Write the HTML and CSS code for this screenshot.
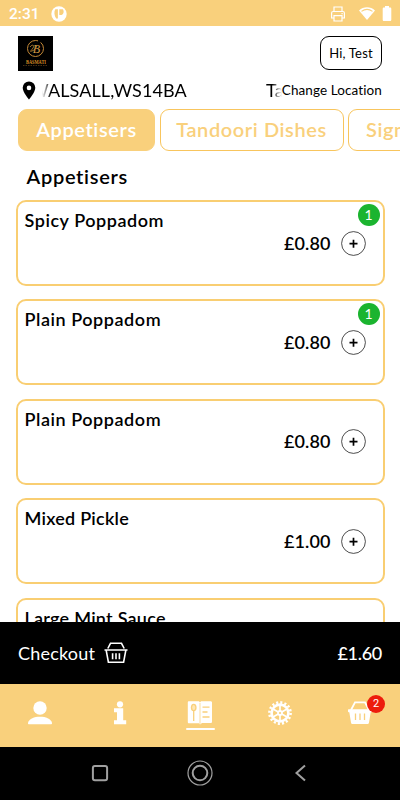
FILE: index.html
```html
<!DOCTYPE html>
<html lang="en">
<head>
    <meta charset="UTF-8">
    <meta name="viewport" content="width=device-width, initial-scale=1.0">
    <title>Menu</title>
    <link rel="stylesheet" href="styles.css">
</head>
<body>
    <div class="status-bar">
        <span class="clock">2:31</span>
        <svg class="app-icon" width="16" height="16" viewBox="0 0 16 16">
            <circle cx="8" cy="8" r="7.7" fill="#fff"/>
            <path d="M4.3 3.2h2.6v9.3H5.2C3.2 10 2.8 5.5 4.3 3.2zM8.3 3.2h3.6c1.7 2.6.4 5.8-2.2 5.8H8.3z" fill="#f9d07c"/>
        </svg>
        <div class="status-icons">
            <svg width="16" height="16" viewBox="0 0 16 16" fill="none" stroke="#fff" stroke-width="1.2">
                <path d="M4 5.500V1h8v4.500M3.700 12H1.600V7c0-1 .6-1.500 1.500-1.500h9.800c.9 0 1.500.5 1.500 1.500v5h-2.100M4 9.700h8V15H4z"/>
                <path d="M11.500 7.600h1.200"/>
            </svg>
            <svg class="wifi" width="18" height="15" viewBox="0 0 18 15">
                <path d="M1 4.500C5.500.2 12.500.2 17 4.500L9 14z" fill="#fff"/>
                <path d="M3.500 5.400c3.300-2.500 7.700-2.500 11 0" fill="none" stroke="#f9d07c" stroke-width="1.1"/>
            </svg>
            <svg width="10" height="15" viewBox="0 0 10 15">
                <path d="M3 0h4v1.500h1c.8 0 1.300.5 1.300 1.200v11c0 .8-.5 1.300-1.300 1.300H2c-.8 0-1.300-.5-1.300-1.300v-11c0-.7.5-1.200 1.300-1.200h1z" fill="#fff"/>
            </svg>
        </div>
    </div>

    <header class="header">
        <div class="logo">
            <svg width="35" height="35" viewBox="0 0 35 35">
                <rect width="35" height="35" fill="#000"/>
                <circle cx="17.5" cy="12.5" r="8" fill="none" stroke="#c58a38" stroke-width="1" stroke-dasharray="40 3"/>
                <text class="logo-mark" x="18.5" y="16.5" text-anchor="middle">B</text>
                <path d="M12 11c2-3 5-2 3 1s-4 4-1 3 4-3 5-6" fill="none" stroke="#c78b36" stroke-width=".8"/>
                <text class="logo-name" x="8" y="27.5" textLength="20" lengthAdjust="spacingAndGlyphs">BASMATI</text>
                <path d="M5 29.500h25" stroke="#65431a" stroke-width=".7" stroke-dasharray="1.500 1"/>
            </svg>
        </div>
        <button class="user-button">Hi, Test</button>
    </header>

    <div class="location">
        <svg class="pin" width="14" height="19" viewBox="0 0 14 19">
            <path fill-rule="evenodd" d="M7 .5A6.300 6.300 0 0 0 .700 6.800C.700 11.500 7 18.500 7 18.500s6.300-7 6.300-11.700A6.300 6.300 0 0 0 7 .5zm0 4.100a2.300 2.300 0 1 1 0 4.600 2.300 2.300 0 0 1 0-4.600z"/>
        </svg>
        <div class="marquee">
            <span class="address">WALSALL,WS14BA</span>
            <span class="address-next">Ta</span>
        </div>
        <a href="#" class="change-location">Change Location</a>
    </div>

    <nav class="categories">
        <a href="#" class="category active">Appetisers</a>
        <a href="#" class="category wide">Tandoori Dishes</a>
        <a href="#" class="category last">Signature</a>
    </nav>

    <main class="menu">
        <h1>Appetisers</h1>
        <div class="item">
            <div class="item-name">Spicy Poppadom</div>
            <div class="item-price">£0.80</div>
            <button class="add"><svg width="25" height="25" viewBox="0 0 25 25"><circle cx="12.5" cy="12.5" r="11.9"/><path d="M12.500 8.700v8M8.500 12.700h8"/></svg></button>
            <span class="count">1</span>
        </div>
        <div class="item">
            <div class="item-name">Plain Poppadom</div>
            <div class="item-price">£0.80</div>
            <button class="add"><svg width="25" height="25" viewBox="0 0 25 25"><circle cx="12.5" cy="12.5" r="11.9"/><path d="M12.500 8.700v8M8.500 12.700h8"/></svg></button>
            <span class="count">1</span>
        </div>
        <div class="item">
            <div class="item-name">Plain Poppadom</div>
            <div class="item-price">£0.80</div>
            <button class="add"><svg width="25" height="25" viewBox="0 0 25 25"><circle cx="12.5" cy="12.5" r="11.9"/><path d="M12.500 8.700v8M8.500 12.700h8"/></svg></button>
        </div>
        <div class="item">
            <div class="item-name mixed">Mixed Pickle</div>
            <div class="item-price">£1.00</div>
            <button class="add"><svg width="25" height="25" viewBox="0 0 25 25"><circle cx="12.5" cy="12.5" r="11.9"/><path d="M12.500 8.700v8M8.500 12.700h8"/></svg></button>
        </div>
        <div class="item">
            <div class="item-name mixed">Large Mint Sauce</div>
        </div>
    </main>

    <div class="checkout">
        <span class="checkout-label">Checkout</span>
        <svg width="24" height="22" viewBox="0 0 24 22" fill="none" stroke="#fff" stroke-width="1.6">
            <path d="M.500 8h23M2.200 8.300l2.200 11.900h15.200l2.200-11.900M3.800 6.500L6.500 1.300h11l2.700 5.200M8.600 11.300v5.900M12 11.300v5.900M15.400 11.300v5.900"/>
        </svg>
        <span class="total">£1.60</span>
    </div>

    <nav class="tab-bar">
        <a href="#" class="tab">
            <svg width="24" height="24" viewBox="0 0 24 24">
                <circle cx="12" cy="7" r="6.7"/>
                <path d="M0 21.700C1.500 17.800 6 15.800 12 15.800s10.500 2 12 5.900v.6c0 .6-.4 1-1 1H1c-.6 0-1-.4-1-1z"/>
            </svg>
        </a>
        <a href="#" class="tab">
            <svg width="24" height="24" viewBox="0 0 24 24">
                <circle cx="12" cy="3.3" r="3.1"/>
                <path d="M6 7.300h9.200v11.900h3v4H6v-4h3v-7.900H6z"/>
            </svg>
        </a>
        <a href="#" class="tab selected">
            <svg width="26" height="24" viewBox="0 0 26 24">
                <path d="M2 .300h9.500c.8 0 1 .6 1.500 1.300.5-.7.700-1.300 1.500-1.300h9c1 0 1.500.5 1.500 1.500v18.700c0 1-.5 1.500-1.500 1.500H15L13 23.500l-1-1.300H2c-.8 0-1.200-.5-1.200-1.300V1.500C.800.800 1.200.300 2 .300z"/>
                <ellipse class="hole" cx="6.7" cy="6.5" rx="2.9" ry="3.8"/>
                <path class="line" d="M6.700 9v11M15.500 6.100h7M15.500 11h5M15.500 16h7"/>
                <path class="line thin" d="M13 2v21"/>
                <ellipse class="spoon" cx="6.7" cy="6.5" rx="1.5" ry="2.5"/>
            </svg>
        </a>
        <a href="#" class="tab">
            <svg width="24" height="24" viewBox="0 0 24 24">
                <circle cx="12" cy="12" r="10.6" fill="none" stroke="#fff" stroke-width="2.6" stroke-dasharray="2.08 2.08"/>
                <circle cx="12" cy="12" r="8.4" fill="none" stroke="#fff" stroke-width="2.6"/>
                <path d="M12 4v16M5 8l14 8M5 16l14-8" stroke="#fff" stroke-width="1.7"/>
                <circle cx="12" cy="12" r="2.9"/>
                <circle class="hole" cx="12" cy="12" r="1.1"/>
            </svg>
        </a>
        <a href="#" class="tab">
            <svg width="24" height="24" viewBox="0 0 24 24">
                <path d="M3 9L7 1.300h10L21 9" fill="none" stroke="#fff" stroke-width="1.8"/>
                <path d="M.500 8.300h23c.3 0 .5.300.5.600v1.700c0 .4-.3.700-.7.700h-.6L21 21.500c-.2 1-.8 1.500-1.700 1.500H4.700c-1 0-1.500-.5-1.700-1.500L1.300 11.300H.700c-.4 0-.7-.3-.7-.7V8.900c0-.3.2-.6.500-.6z"/>
                <path class="line" d="M7.500 12.500v6.500M12 12.500v6.500M16.500 12.500v6.500"/>
            </svg>
            <span class="basket-count">2</span>
        </a>
    </nav>

    <div class="system-bar">
        <svg width="24" height="26" viewBox="0 0 24 26">
            <rect x="4.9" y="6" width="14.2" height="14.2" rx="2" stroke-width="2"/>
        </svg>
        <svg width="26" height="26" viewBox="0 0 26 26">
            <circle cx="13" cy="13" r="12" stroke-width="1.2"/>
            <circle cx="13" cy="13" r="7.3" stroke-width="2"/>
        </svg>
        <svg width="24" height="26" viewBox="0 0 24 26">
            <path d="M17 5.500L8.500 13l8.500 7.500" stroke-width="2"/>
        </svg>
    </div>
</body>
</html>
```
FILE: styles.css
```css
* {
    box-sizing: border-box;
}

body {
    margin: 0;
    width: 400px;
    height: 800px;
    overflow: hidden;
    display: flex;
    flex-direction: column;
    background: #fff;
    color: #000;
    font-family: Lato, 'Open Sans', sans-serif;
    font-variant-ligatures: none;
}

a {
    color: inherit;
    text-decoration: none;
}

button {
    font-family: inherit;
    color: #000;
    background: #fff;
    padding: 0;
}

svg {
    display: block;
    flex-shrink: 0;
}

/* Android status bar */
.status-bar {
    height: 26px;
    flex-shrink: 0;
    display: flex;
    align-items: center;
    padding: 1px 8px 0 9px;
    background: #f9d07c;
    color: #fff;
}

.clock {
    width: 42px;
    font: 500 15.5px/20px Roboto, sans-serif;
}

.status-icons {
    display: flex;
    align-items: center;
    gap: 6px;
    margin-left: auto;
}

.wifi {
    margin-left: 6px;
}

/* Header */
.header {
    display: flex;
    justify-content: space-between;
    padding: 10px 18px 0;
    height: 54px;
    flex-shrink: 0;
}

.logo-mark {
    font: italic 12px 'Liberation Serif', serif;
    fill: #d29843;
}

.logo-name {
    font: bold 6.5px 'Liberation Serif', serif;
    fill: #d98f24;
}

.user-button {
    width: 62px;
    height: 34px;
    border: 1px solid #000;
    border-radius: 9px;
    font-size: 13px;
    letter-spacing: 0.2px;
}

.location {
    display: flex;
    align-items: center;
    height: 20px;
    padding: 0 18px 0 22px;
    margin-bottom: 9px;
    flex-shrink: 0;
}

.marquee {
    display: flex;
    justify-content: space-between;
    width: 240px;
    margin-left: 6px;
    overflow: hidden;
    font-size: 18px;
    line-height: 20px;
    letter-spacing: 0.1px;
    white-space: nowrap;
    -webkit-mask-image: linear-gradient(90deg, transparent, #000 9px, #000 230px, transparent);
    mask-image: linear-gradient(90deg, transparent, #000 9px, #000 230px, transparent);
}

.address {
    margin-left: -12px;
}

.address-next {
    margin-right: -2px;
}

.change-location {
    margin-left: auto;
    font-size: 13.5px;
    letter-spacing: 0.1px;
    white-space: nowrap;
}

/* Category tabs */
.categories {
    display: flex;
    gap: 4.5px;
    height: 42px;
    flex-shrink: 0;
    padding-left: 18px;
    overflow: hidden;
}

.category {
    display: flex;
    align-items: center;
    justify-content: center;
    width: 137px;
    flex-shrink: 0;
    padding-bottom: 2px;
    border: 1px solid #f8c55d;
    border-radius: 9px;
    color: #f9d07c;
    font-size: 20px;
    font-weight: 600;
    letter-spacing: 0.6px;
    white-space: nowrap;
}

.category.wide {
    width: 184px;
}

.category.last {
    justify-content: flex-start;
    padding-left: 17px;
}

.category.active {
    background: #f9d07c;
    border-color: #f9d07c;
    color: #fff;
}

/* Menu list */
.menu {
    height: 471px;
    flex-shrink: 0;
    overflow: hidden;
    padding: 0 15.5px;
}

h1 {
    margin: 13px 0 11px 11px;
    font-size: 20px;
    font-weight: 600;
    line-height: 25px;
    letter-spacing: 0.7px;
}

.item {
    position: relative;
    display: flex;
    align-items: center;
    height: 86px;
    margin-bottom: 13.4px;
    padding-right: 17px;
    border: 2px solid #f9ce72;
    border-radius: 10px;
}

.item-name {
    align-self: flex-start;
    padding: 6px 0 0 7px;
    font-size: 18px;
    font-weight: 600;
    line-height: 24px;
    letter-spacing: 0.55px;
}

.item-name.mixed {
    letter-spacing: 0.25px;
}

.item-price {
    margin: -1px 0 0 auto;
    font-size: 18px;
    font-weight: 600;
    letter-spacing: 0.1px;
}

.add {
    width: 25px;
    height: 25px;
    margin-left: 10px;
    border: 0;
}

.add svg {
    fill: none;
    stroke: #000;
    stroke-width: 1.7;
}

.add circle {
    stroke-width: 0.7;
}

.count {
    position: absolute;
    top: 2px;
    right: 3px;
    width: 22px;
    height: 22px;
    border-radius: 50%;
    background: #1bb42f;
    color: #fff;
    font-size: 14px;
    line-height: 22px;
    text-align: center;
}

/* Checkout strip */
.checkout {
    display: flex;
    align-items: center;
    height: 62px;
    flex-shrink: 0;
    padding: 0 18px;
    background: #000;
    color: #fff;
    font-size: 18px;
}

.checkout-label {
    letter-spacing: 0.2px;
}

.checkout svg {
    margin-left: 9px;
}

.total {
    margin-left: auto;
    font-weight: 500;
    letter-spacing: -0.3px;
}

/* Bottom tabs */
.tab-bar {
    display: flex;
    height: 63px;
    flex-shrink: 0;
    background: #f9d07c;
}

.tab {
    position: relative;
    display: flex;
    flex-direction: column;
    align-items: center;
    flex: 1;
    padding-top: 16.5px;
}

.tab svg {
    fill: #fff;
}

.tab.selected::after {
    content: '';
    width: 29px;
    height: 2px;
    margin-top: 3px;
    border-radius: 1px;
    background: #fff;
}

.tab .hole {
    fill: #f9d07c;
}

.tab .spoon {
    fill: #ffe7b4;
}

.tab .line {
    fill: none;
    stroke: #f9d07c;
    stroke-width: 1.3;
}

.tab .thin {
    stroke-width: 0.7;
}

.basket-count {
    position: absolute;
    top: 11px;
    left: 47px;
    width: 18px;
    height: 18px;
    border-radius: 50%;
    background: #ed1c0c;
    color: #fff;
    font: 11px/18px Roboto, sans-serif;
    text-align: center;
}

/* Android navigation */
.system-bar {
    display: flex;
    align-items: center;
    justify-content: space-between;
    height: 53px;
    flex-shrink: 0;
    padding: 0 88px 1px;
    background: #000;
}

.system-bar svg {
    fill: none;
    stroke: #a0a0a0;
}
```
